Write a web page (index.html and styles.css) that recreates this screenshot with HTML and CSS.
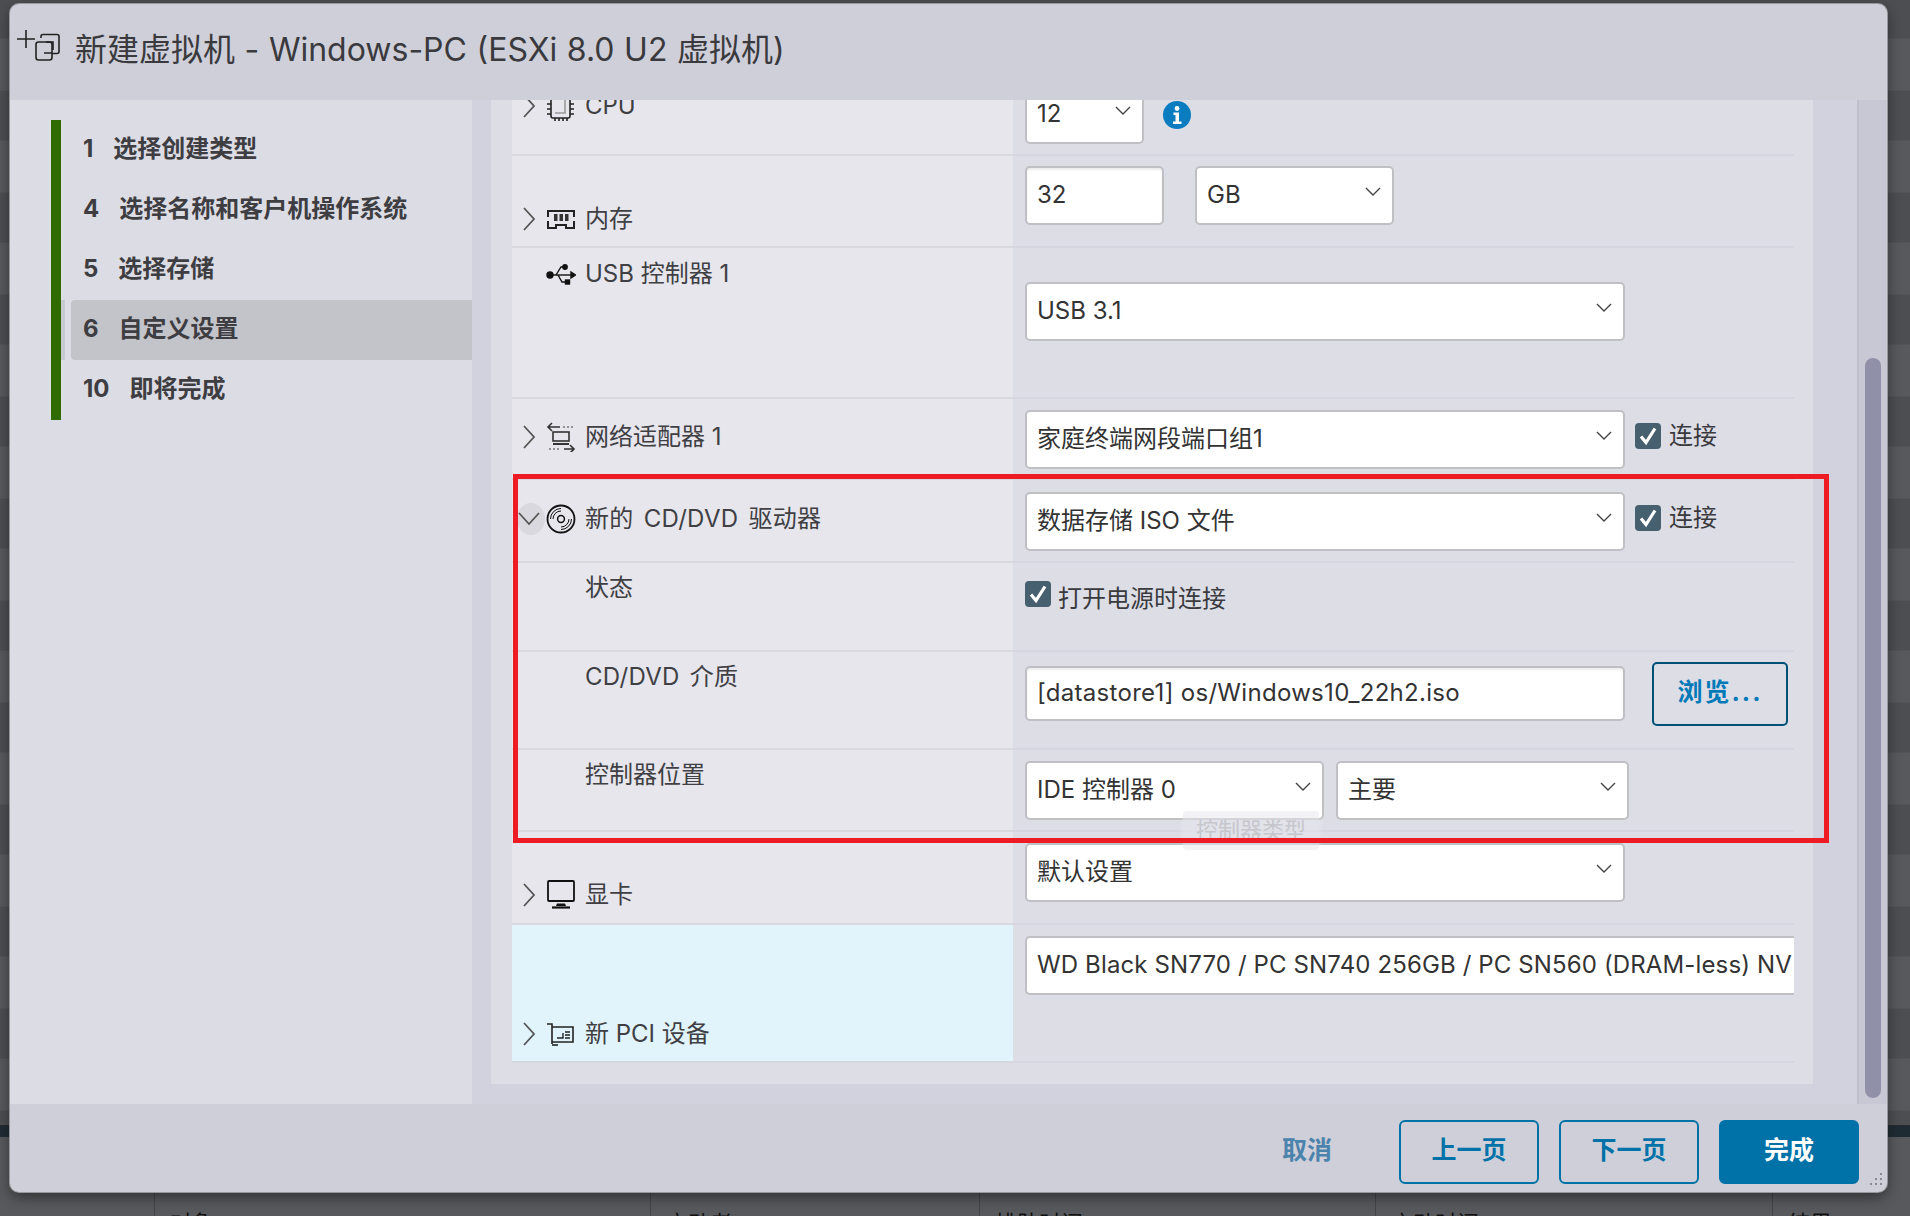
FILE: index.html
```html
<!DOCTYPE html>
<html lang="zh-CN">
<head>
<meta charset="utf-8">
<title>新建虚拟机</title>
<link rel="stylesheet" href="styles.css">
</head>
<body>
<div class="backdrop">
  <div class="bg-rows"></div>
  <div class="bg-band"></div>
  <div class="bg-table">
    <div class="bg-cell c1"></div>
    <div class="bg-cell c2">对象</div>
    <div class="bg-cell c3">启动者</div>
    <div class="bg-cell c4">排队时间</div>
    <div class="bg-cell c5">启动时间</div>
    <div class="bg-cell c6">结果</div>
  </div>
</div>

<div class="modal">
  <header class="m-head">
    <svg class="head-icon" width="48" height="36" viewBox="0 0 48 36" fill="none" stroke="#222" stroke-width="1.6"><path d="M1 9h18M10 0v18"/><path d="M25 8v-1.500a2 2 0 0 1 2-2h14a2 2 0 0 1 2 2v15a2 2 0 0 1-2 2h-5"/><rect x="20" y="12" width="16" height="18" rx="2.500"/><path d="M30 12h7v8"/><path d="M28 23h8"/></svg>
    <h1 class="m-title">新建虚拟机 - Windows-PC (ESXi 8.0 U2 虚拟机)</h1>
  </header>
  <div class="m-body">
    <nav class="side">
      <div class="steps">
        <div class="step"><div class="step-in"><span>1</span><span>选择创建类型</span></div></div>
        <div class="step"><div class="step-in"><span>4</span><span>选择名称和客户机操作系统</span></div></div>
        <div class="step"><div class="step-in"><span>5</span><span>选择存储</span></div></div>
        <div class="step active"><div class="step-in"><span>6</span><span>自定义设置</span></div></div>
        <div class="step"><div class="step-in"><span>10</span><span>即将完成</span></div></div>
      </div>
    </nav>
    <main class="main">
      <div class="panel">
        <div class="rows">

          <div class="row r-cpu">
            <div class="left"><div class="lbl">
              <svg class="chev" width="24" height="30" viewBox="0 0 24 30"><path d="M6 4l10 11L6 26" fill="none" stroke="#555" stroke-width="1.800"/></svg>
              <svg class="ico" width="30" height="30" viewBox="0 0 30 30" fill="none" stroke="#222" stroke-width="1.600"><rect x="5" y="1" width="19" height="26" rx="2"/><path d="M1 8h4M1 13h4M1 18h4M1 23h4M24 8h4M24 13h4M24 18h4M24 23h4M9 27v3M13 27v3M17 27v3M21 27v3"/><path d="M9 22h10V8" stroke="#999"/></svg>
              <span>CPU</span>
            </div></div>
            <div class="right">
              <div class="sel w118"><span>12</span><svg class="caret" width="16" height="9" viewBox="0 0 16 9"><path d="M1 1l7 7 7-7" fill="none" stroke="#444" stroke-width="1.400"/></svg></div>
              <svg class="info" width="28" height="28" viewBox="0 0 28 28"><circle cx="14" cy="14" r="14" fill="#0a7cbf"/><circle cx="14" cy="7.500" r="2.400" fill="#fff"/><path d="M10.500 11.500h5.500v9h2.500v2.500h-8.500v-2.500h2.500v-6.500h-2z" fill="#fff"/></svg>
            </div>
          </div>

          <div class="row r-mem">
            <div class="left"><div class="lbl">
              <svg class="chev" width="24" height="30" viewBox="0 0 24 30"><path d="M6 4l10 11L6 26" fill="none" stroke="#555" stroke-width="1.800"/></svg>
              <svg class="ico" width="30" height="30" viewBox="0 0 30 30" fill="none" stroke="#222" stroke-width="2"><path d="M2 13V7h26v6M2 17v7h8v-3h10v3h8v-7"/><path d="M8 10h3.500v7H8zM13.500 10H17v7h-3.500zM19 10h3.500v7H19z" fill="#333" stroke="none"/></svg>
              <span>内存</span>
            </div></div>
            <div class="right">
              <div class="sel inp w138"><span>32</span></div>
              <div class="sel w198 gap32"><span>GB</span><svg class="caret" width="16" height="9" viewBox="0 0 16 9"><path d="M1 1l7 7 7-7" fill="none" stroke="#444" stroke-width="1.400"/></svg></div>
            </div>
          </div>

          <div class="row r-usb">
            <div class="left"><div class="lbl">
              <span class="chev-slot"></span>
              <svg class="ico" width="30" height="30" viewBox="0 0 30 30" fill="none" stroke="#111" stroke-width="1.400"><circle cx="4" cy="16" r="3" fill="#111"/><path d="M4 16h22"/><path d="M25 13l4.500 3-4.500 3z" fill="#111"/><path d="M10 16l5-8h3M12 16l4 7h4"/><circle cx="19" cy="8" r="2.200" fill="#111"/><rect x="19.500" y="21" width="4" height="4" fill="#111"/></svg>
              <span>USB 控制器 1</span>
            </div></div>
            <div class="right">
              <div class="sel w598"><span>USB 3.1</span><svg class="caret" width="16" height="9" viewBox="0 0 16 9"><path d="M1 1l7 7 7-7" fill="none" stroke="#444" stroke-width="1.400"/></svg></div>
            </div>
          </div>

          <div class="row r-net">
            <div class="left"><div class="lbl">
              <svg class="chev" width="24" height="30" viewBox="0 0 24 30"><path d="M6 4l10 11L6 26" fill="none" stroke="#555" stroke-width="1.800"/></svg>
              <svg class="ico" width="30" height="30" viewBox="0 0 30 30" fill="none" stroke="#333" stroke-width="1.600"><path d="M2 5h12M6 1L2 5l4 4"/><path d="M17 5h2M21 5h2M25 5h2" stroke="#777"/><rect x="7" y="10" width="16" height="9" /><path d="M7 22h16" stroke-width="2"/><path d="M18 27h10M24 23l4 4-4 4" /><path d="M3 27h2M7 27h2M11 27h2" stroke="#777"/></svg>
              <span>网络适配器 1</span>
            </div></div>
            <div class="right">
              <div class="sel w598"><span>家庭终端网段端口组1</span><svg class="caret" width="16" height="9" viewBox="0 0 16 9"><path d="M1 1l7 7 7-7" fill="none" stroke="#444" stroke-width="1.400"/></svg></div>
              <label class="conn"><svg class="check" width="26" height="26" viewBox="0 0 26 26"><rect width="26" height="26" rx="4" fill="#47606f"/><path d="M6 13.500l5 6 9-14" fill="none" stroke="#fff" stroke-width="3.200"/></svg><span>连接</span></label>
            </div>
          </div>

          <div class="row r-cd">
            <div class="left"><div class="lbl">
              <span class="chev-open"><svg width="24" height="14" viewBox="0 0 24 14"><path d="M2 1l10 11L22 1" fill="none" stroke="#555" stroke-width="1.800"/></svg></span>
              <svg class="ico" width="30" height="30" viewBox="0 0 30 30" fill="none" stroke="#111"><circle cx="15" cy="15" r="13.500" stroke-width="1.800"/><circle cx="15" cy="15" r="3.400" stroke-width="1.500"/><path d="M15 7a8 8 0 0 0-8 8M15 4.500A10.500 10.500 0 0 0 4.500 15M15 23a8 8 0 0 0 8-8M15 25.500A10.500 10.500 0 0 0 25.500 15" stroke-width="1"/></svg>
              <span class="spaced">新的 CD/DVD 驱动器</span>
            </div></div>
            <div class="right">
              <div class="sel w598"><span>数据存储 ISO 文件</span><svg class="caret" width="16" height="9" viewBox="0 0 16 9"><path d="M1 1l7 7 7-7" fill="none" stroke="#444" stroke-width="1.400"/></svg></div>
              <label class="conn"><svg class="check" width="26" height="26" viewBox="0 0 26 26"><rect width="26" height="26" rx="4" fill="#47606f"/><path d="M6 13.500l5 6 9-14" fill="none" stroke="#fff" stroke-width="3.200"/></svg><span>连接</span></label>
            </div>
          </div>

          <div class="row r-state">
            <div class="left"><div class="lbl sub"><span>状态</span></div></div>
            <div class="right">
              <label class="power"><svg class="check" width="26" height="26" viewBox="0 0 26 26"><rect width="26" height="26" rx="4" fill="#47606f"/><path d="M6 13.500l5 6 9-14" fill="none" stroke="#fff" stroke-width="3.200"/></svg><span>打开电源时连接</span></label>
            </div>
          </div>

          <div class="row r-media">
            <div class="left"><div class="lbl sub"><span class="spaced">CD/DVD 介质</span></div></div>
            <div class="right">
              <div class="sel inp w598 h54"><span class="spaced">[datastore1] os/Windows10_22h2.iso</span></div>
              <button class="browse"><span class="lift">浏览...</span></button>
            </div>
          </div>

          <div class="row r-ctrl">
            <div class="left"><div class="lbl sub"><span>控制器位置</span></div></div>
            <div class="right">
              <div class="sel w298"><span>IDE 控制器 0</span><svg class="caret" width="16" height="9" viewBox="0 0 16 9"><path d="M1 1l7 7 7-7" fill="none" stroke="#444" stroke-width="1.400"/></svg></div>
              <div class="sel w292 gap12"><span>主要</span><svg class="caret" width="16" height="9" viewBox="0 0 16 9"><path d="M1 1l7 7 7-7" fill="none" stroke="#444" stroke-width="1.400"/></svg></div>
            </div>
          </div>

          <div class="row r-disp">
            <div class="left"><div class="lbl">
              <svg class="chev" width="24" height="30" viewBox="0 0 24 30"><path d="M6 4l10 11L6 26" fill="none" stroke="#555" stroke-width="1.800"/></svg>
              <svg class="ico" width="30" height="30" viewBox="0 0 30 30" fill="none" stroke="#111" stroke-width="1.800"><rect x="2" y="1" width="26" height="20" rx="1"/><path d="M11 23.500h8l1 2.500h-10z" fill="#111" stroke="none"/><path d="M6 27.500h18" stroke-width="2.200"/></svg>
              <span>显卡</span>
            </div></div>
            <div class="right">
              <div class="sel w598"><span>默认设置</span><svg class="caret" width="16" height="9" viewBox="0 0 16 9"><path d="M1 1l7 7 7-7" fill="none" stroke="#444" stroke-width="1.400"/></svg></div>
            </div>
          </div>

          <div class="row r-pci">
            <div class="left"><div class="lbl">
              <svg class="chev" width="24" height="30" viewBox="0 0 24 30"><path d="M6 4l10 11L6 26" fill="none" stroke="#555" stroke-width="1.800"/></svg>
              <svg class="ico" width="30" height="30" viewBox="0 0 30 30" fill="none" stroke="#222" stroke-width="1.600"><path d="M1 5h5v20M6 8h21v15H6"/><path d="M6 26h6"/><path d="M11 19h6v-5" stroke-width="1.400"/><path d="M19 13h5M19 16h5M19 19h5" stroke-width="1.400"/></svg>
              <span>新 PCI 设备</span>
            </div></div>
            <div class="right">
              <div class="sel w-clip"><span class="spaced-sm">WD Black SN770 / PC SN740 256GB / PC SN560 (DRAM-less) NV</span></div>
            </div>
          </div>

        </div>
      </div>
      <div class="track"><div class="thumb"></div></div>
    </main>
  </div>
  <footer class="m-foot">
    <span class="cancel">取消</span>
    <button class="btn"><span class="lift">上一页</span></button>
    <button class="btn"><span class="lift">下一页</span></button>
    <button class="btn primary"><span class="lift">完成</span></button>
    <svg class="grip" width="14" height="14" viewBox="0 0 14 14" fill="#77777f"><circle cx="12" cy="2" r="1.100"/><circle cx="7" cy="7" r="1.100"/><circle cx="12" cy="7" r="1.100"/><circle cx="2" cy="12" r="1.100"/><circle cx="7" cy="12" r="1.100"/><circle cx="12" cy="12" r="1.100"/></svg>
  </footer>
  <div class="tip">控制器类型</div>
  <div class="mark"></div>
</div>
</body>
</html>
```
FILE: styles.css
```css
* { box-sizing: border-box; }
html, body { margin: 0; height: 1216px; overflow: hidden; }
body {
  font-family: "Inter", "Noto Sans CJK SC", sans-serif;
  font-size: 24px;
  color: #3a3a3e;
  background: #4f5054;
}
.backdrop { display: flex; flex-direction: column; height: 1216px; overflow: hidden; }
.bg-rows {
  height: 1125px;
  flex: none;
  background: repeating-linear-gradient(to bottom, #4d4e52 0, #4d4e52 38px, #58595c 39px, #58595c 90px, #4d4e52 91px, #4d4e52 102px);
}
.bg-band { height: 12px; flex: none; background: #1f2b33; }
.bg-table { flex: 1; min-height: 0; display: flex; background: #58595c; color: #111; font-size: 22px; }
.bg-cell { padding: 75px 0 0 15px; border-right: 1px solid #444549; line-height: 22px; }
.c1 { width: 155px; }
.c2 { width: 496px; }
.c3 { width: 329px; }
.c4 { width: 396px; }
.c5 { width: 397px; }
.c6 { flex: 1; border-right: 0; }

.modal {
  position: absolute;
  left: 10px;
  top: 4px;
  width: 1877px;
  height: 1188px;
  display: flex;
  flex-direction: column;
  overflow: hidden;
  border-radius: 9px;
  background: #cfcfd9;
  box-shadow: 0 0 0 1px #97979d, 0 5px 14px rgba(0,0,0,.45);
}
.m-head { height: 96px; display: flex; align-items: flex-start; padding: 26px 0 0 6px; flex: none; }
.head-icon { flex: none; }
.m-title { margin: 2px 0 0 11px; font-size: 32px; font-weight: 400; line-height: 36px; color: #3a3a3e; white-space: nowrap; word-spacing: .6px; }
.m-body { flex: 1; display: flex; min-height: 0; }
.side { width: 462px; flex: none; background: #dcdce4; padding: 20px 0 0 41px; }
.steps { border-left: 10px solid #2f6b00; height: 300px; }
.step { height: 60px; border-left: 4px solid transparent; padding-left: 6px; }
.step.active { border-left-color: #c8c8d0; }
.step.active .step-in { background: #c3c3ca; }
.step-in { height: 60px; display: flex; align-items: center; gap: 20px; padding: 0 0 2px 12px; border-radius: 4px 0 0 4px; font-weight: 700; color: #3d3d42; line-height: 30px; }

.main { flex: 1; display: flex; background: #d2d2de; min-width: 0; }
.panel { width: 1322px; margin: 0 0 20px 19px; background: #dddde6; padding: 0 19px 0 21px; overflow: hidden; }
.rows { margin-top: -24px; }
.row { display: flex; border-bottom: 2px solid #d6d6e0; }
.left { width: 501px; flex: none; background: #e6e6ec; margin-bottom: -2px; border-bottom: 2px solid #d8d8e1; }
.right { flex: 1; display: flex; align-items: flex-start; padding-left: 12px; min-width: 0; overflow: hidden; }
.lbl { display: flex; align-items: center; height: 30px; margin-top: 1px; padding-left: 6px; white-space: nowrap; line-height: 30px; color: #3f3f44; }
.lbl > span:last-child { margin-left: 1px; }
.lbl.sub { padding-left: 72px; }
.spaced { letter-spacing: .3px; }
.lbl .spaced { word-spacing: 3px; }
.spaced-sm { letter-spacing: .13px; }
.chev, .chev-slot { width: 24px; flex: none; }
.ico { margin: 0 8px 0 4px; flex: none; }
.chev-open { width: 28px; height: 32px; margin: 0 0 0 -1px; padding-right: 4px; flex: none; display: flex; align-items: center; justify-content: center; border-radius: 50%; background: #d8d8de; }
.r-cd .ico { margin-left: 1px; }

.r-cpu { height: 80px; }
.r-cpu .left { padding-top: 14px; }
.r-cpu .right { padding-top: 9px; }
.r-mem { height: 92px; }
.r-mem .left { padding-top: 47px; }
.r-mem .right { padding-top: 10px; }
.r-usb { height: 151px; }
.r-usb .left { padding-top: 10px; }
.r-usb .right { padding-top: 34px; }
.r-net { height: 81px; }
.r-net .left { padding-top: 22px; }
.r-net .right { padding-top: 11px; }
.r-cd { height: 83px; }
.r-cd .left { padding-top: 23px; }
.r-cd .right { padding-top: 12px; }
.r-state { height: 89px; }
.r-state .left { padding-top: 9px; }
.r-state .right { padding-top: 18px; }
.r-media { height: 98px; }
.r-media .left { padding-top: 9px; }
.r-media .right { padding-top: 10px; }
.r-ctrl { height: 82px; }
.r-ctrl .left { padding-top: 9px; }
.r-ctrl .right { padding-top: 11px; }
.r-disp { height: 93px; }
.r-disp .left { padding-top: 47px; }
.r-disp .right { padding-top: 11px; }
.r-pci { height: 138px; }
.r-pci .left { padding-top: 93px; background: #e1f4fb; }
.r-pci .right { padding-top: 11px; }

.sel {
  height: 59px;
  display: flex;
  align-items: center;
  justify-content: space-between;
  flex: none;
  padding: 0 11px 1px 10px;
  line-height: 30px;
  background: #fff;
  border: 2px solid #bfbfc4;
  border-radius: 5px;
  white-space: nowrap;
  color: #333;
  overflow: hidden;
}
.inp { box-shadow: inset 0 2px 2px rgba(0,0,0,.08); }
.caret { margin-bottom: 8px; flex: none; }
.w118 { width: 119px; }
.w138 { width: 139px; }
.w198 { width: 199px; }
.w598 { width: 600px; }
.w298 { width: 299px; }
.w292 { width: 293px; }
.h54 { height: 55px; margin-top: 4px; }
.gap32 { margin-left: 31px; }
.gap12 { margin-left: 12px; }
.w-clip { width: 769px; border-right: 0; border-radius: 5px 0 0 5px; justify-content: flex-start; }
.info { margin: 16px 0 0 19px; flex: none; }
.conn { display: flex; align-items: center; gap: 8px; margin: 13px 0 0 10px; height: 26px; line-height: 30px; }
.conn span { margin-bottom: 0; }
.power { display: flex; gap: 7px; }
.power span { line-height: 30px; margin-top: 3px; }
.check { flex: none; }
.lift { position: relative; top: -4px; }
.browse {
  margin: 0 0 0 27px;
  width: 136px;
  height: 64px;
  font: 700 25px "Inter", "Noto Sans CJK SC", sans-serif;
  letter-spacing: 2px;
  color: #0079b8;
  background: transparent;
  border: 2px solid #004f74;
  border-radius: 5px;
  padding: 0;
}
.track { width: 30px; margin-left: 44px; background: #c8c8d4; border-left: 2px solid #bfbfcc; padding-left: 6px; }
.thumb { width: 16px; height: 740px; margin-top: 258px; border-radius: 8px; background: #9090a8; }

.m-foot { height: 88px; flex: none; display: flex; align-items: flex-start; justify-content: flex-end; gap: 20px; padding: 16px 28px 0 0; position: relative; }
.cancel { margin-right: 47px; line-height: 28px; margin-top: 16px; font-size: 25px; font-weight: 700; color: #4a83ac; }
.btn {
  width: 140px;
  height: 64px;
  font: 700 25px "Inter", "Noto Sans CJK SC", sans-serif;
  color: #0072a8;
  background: transparent;
  border: 2px solid #0072a8;
  border-radius: 6px;
  padding: 0;
}
.btn.primary { background: #0072a8; color: #fff; }
.grip { position: absolute; right: 4px; bottom: 6px; }
.tip {
  position: absolute;
  left: 1173px;
  top: 807px;
  width: 136px;
  height: 39px;
  line-height: 38px;
  font-size: 22px;
  text-align: center;
  color: #c6c6cc;
  background: rgba(232,232,238,.5);
  border-radius: 4px;
  white-space: nowrap;
  box-shadow: 0 0 6px rgba(255,255,255,.3);
}
.mark { position: absolute; left: 503px; top: 470px; width: 1316px; height: 369px; border: 5px solid #ed1c24; }
```
